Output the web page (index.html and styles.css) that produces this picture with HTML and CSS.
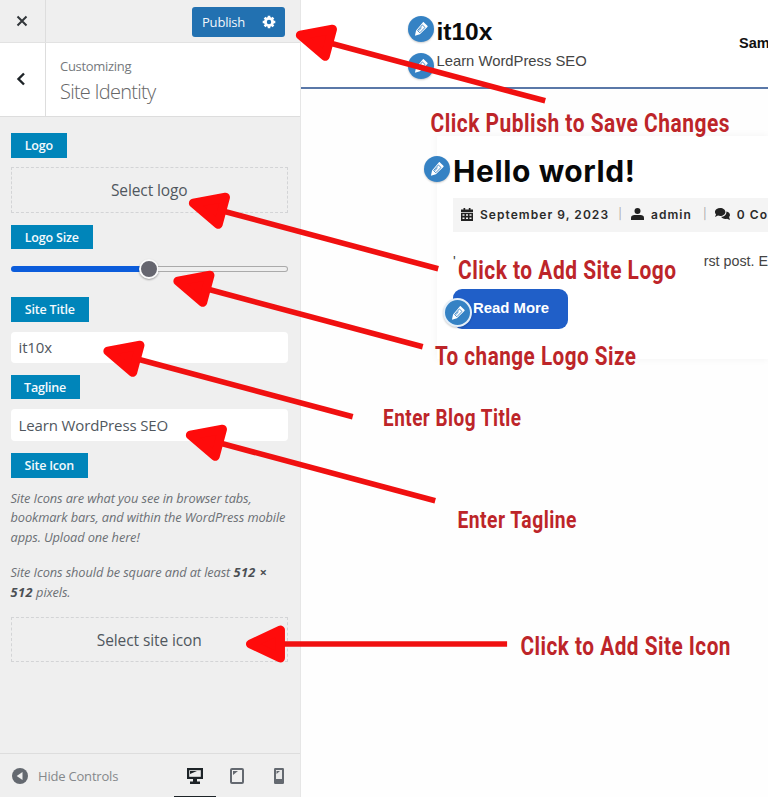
FILE: index.html
```html
<!DOCTYPE html>
<html lang="en">
<head>
<meta charset="utf-8">
<title>Customize: Site Identity</title>
<link rel="stylesheet" href="styles.css">
</head>
<body>
<svg width="0" height="0" class="defs">
  <symbol id="pencil" viewBox="0 0 20 20"><path fill="#fff" d="m13.400 1.600 4.600 4.400c.5.500.5 1.100 0 1.600L8.600 16.600 2.400 18.300l1.400-6.500 8.400-10c.4-.5.8-.6 1.200-.2z"/><path d="m5.700 12 6-7.100 3.300 3.200-6.500 6.600zM10.600 8.300 7.300 12.200" stroke="#3582c4" stroke-width="1.100" fill="none"/></symbol>
  <symbol id="arrow" viewBox="0 -20 264 40" overflow="visible"><path d="M34 0H258" stroke="#f01010" stroke-width="5.6"/><path d="M4.500 0 34-14V14Z" fill="#ff0b0b" stroke="#ff0b0b" stroke-width="9" stroke-linejoin="round"/></symbol>
</svg>
<div class="app">
  <aside class="sidebar">
    <div class="topbar">
      <button class="cell close"><svg width="12" height="12" viewBox="0 0 12 12"><path d="m1.500 1.500 9 9m0-9-9 9" stroke="#32363a" stroke-width="2"/></svg></button>
      <div class="publish"><span class="publish-text">Publish</span>
        <svg width="14" height="14" viewBox="-7 -7 14 14"><circle r="3.600" fill="none" stroke="#fff" stroke-width="2.800"/><path d="M0-6.300V-4M0 4v2.300M-6.300 0H-4M4 0h2.300M-4.400-4.400l1.500 1.500M2.900 2.900l1.500 1.500M-4.400 4.400l1.500-1.500M2.900-2.900l1.500-1.500" stroke="#fff" stroke-width="2.600"/></svg>
      </div>
    </div>
    <div class="section-head">
      <button class="cell back"><svg width="10" height="14" viewBox="0 0 10 14"><path d="M8 1.500 2.500 7 8 12.500" fill="none" stroke="#1d2327" stroke-width="2.400"/></svg></button>
      <div class="heading"><span class="small">Customizing</span><span class="big">Site Identity</span></div>
    </div>
    <div class="controls">
      <span class="label l-logo">Logo</span>
      <div class="drop"><span>Select logo</span></div>
      <span class="label l-size">Logo Size</span>
      <div class="slider"><div class="fill"></div><div class="thumb"></div><div class="rest"></div></div>
      <span class="label l-title">Site Title</span>
      <div class="field"><span>it10x</span></div>
      <span class="label l-tag">Tagline</span>
      <div class="field"><span>Learn WordPress SEO</span></div>
      <span class="label l-icon">Site Icon</span>
      <p class="desc"><span>Site Icons are what you see in browser tabs,</span><br><span>bookmark bars, and within the WordPress mobile</span><br><span>apps. Upload one here!</span></p>
      <p class="desc second"><span>Site Icons should be square and at least <b>512 ×</b></span><br><span><b>512</b> pixels.</span></p>
      <div class="drop icon-drop"><span>Select site icon</span></div>
    </div>
    <div class="footer">
      <svg width="16" height="16" viewBox="0 0 16 16"><circle cx="8" cy="8" r="8" fill="#646970"/><path d="M10.500 4v8L4.700 8z" fill="#eee"/></svg>
      <span class="hide">Hide Controls</span>
      <div class="devices">
        <div class="device active"><svg width="18" height="18" viewBox="0 0 18 18"><path d="M1 1h16v11H1z" fill="#1d2327"/><path d="M3.200 3.200h11.600v6.600H3.200z" fill="#eee"/><path d="M4 4h7L4 7z" fill="#1d2327"/><path d="M7 12h4v2.500h3V17H4v-2.500h3z" fill="#1d2327"/></svg></div>
        <div class="device"><svg width="16" height="18" viewBox="0 0 16 18"><rect x="2" y="2" width="12" height="14" rx="1" fill="none" stroke="#646970" stroke-width="2"/><path d="M4 4h5L4 8z" fill="#646970"/></svg></div>
        <div class="device"><svg width="12" height="18" viewBox="0 0 12 18"><rect x="1" y="1" width="10" height="16" rx="1.200" fill="#646970"/><path d="M3 3h6v9H3z" fill="#e8e8e8"/><path d="M3.500 4H7L3.500 7z" fill="#646970"/></svg></div>
      </div>
    </div>
  </aside>
  <main class="preview">
    <header class="site-head">
      <div class="brand">
        <div class="site-title">it10x<i class="edit e1"><svg width="16" height="16"><use href="#pencil"/></svg></i></div>
        <div class="site-tag">Learn WordPress SEO<i class="edit e2"><svg width="16" height="16"><use href="#pencil"/></svg></i></div>
      </div>
      <span class="nav">Sam</span>
    </header>
    <article class="card">
      <h1>Hello world!<i class="edit e3"><svg width="16" height="16"><use href="#pencil"/></svg></i></h1>
      <div class="meta">
        <svg width="12" height="13" viewBox="0 0 12 13"><path d="M2.500 0h1.700v1.500h3.600V0h1.700v1.500H12V4H0V1.500h2.500zM0 4.700h12V13H0z" fill="#222"/><path d="M1.500 6.200h2v1.500h-2zM5 6.200h2v1.500H5zM8.500 6.200h2v1.500h-2zM1.500 9.500h2V11h-2zM5 9.500h2V11H5zM8.500 9.500h2V11h-2z" fill="#f4f4f4"/></svg>
        <span class="date">September 9, 2023</span><span class="bar">|</span>
        <svg width="13" height="12" viewBox="0 0 13 12"><circle cx="6.500" cy="3" r="3" fill="#222"/><path d="M0 12V9.800C0 7.800 1.500 7 3.500 7h6c2 0 3.500.8 3.500 2.800V12z" fill="#222"/></svg>
        <span class="author">admin</span><span class="bar">|</span>
        <svg width="15" height="12" viewBox="0 0 15 12"><path d="M5.200 0C8.200 0 10.400 1.800 10.400 4S8.200 8 5.200 8c-.8 0-1.500-.1-2.200-.4L0 9l1-2.600C-1.600 3.600.9 0 5.200 0z" fill="#222"/><path d="M11.400 3.600c3.300.6 4.600 3.400 2.700 5.500L15 12l-3-1.200c-2.800.6-5-.3-5.800-2 3-.2 5.400-2.200 5.200-5.200z" fill="#222"/></svg>
        <span class="comments">0 Co</span>
      </div>
      <div class="excerpt"><span class="lead">'</span><span>rst post. E</span></div>
      <div class="more">Read More<i class="edit e4"><svg width="16" height="16"><use href="#pencil"/></svg></i></div>
    </article>
  </main>
</div>
<svg class="notes" width="768" height="797" viewBox="0 0 768 797">
  <use href="#arrow" width="264" height="40" transform="translate(296 34) rotate(15) translate(0 -20)"/>
  <use href="#arrow" width="264" height="40" transform="translate(189 202) rotate(15) translate(0 -20)"/>
  <use href="#arrow" width="264" height="40" transform="translate(173.500 280) rotate(15) translate(0 -20)"/>
  <use href="#arrow" width="264" height="40" transform="translate(103.500 350) rotate(15) translate(0 -20)"/>
  <use href="#arrow" width="264" height="40" transform="translate(186 434) rotate(15) translate(0 -20)"/>
  <use href="#arrow" width="264" height="40" transform="translate(246 644) scale(1.012 1) translate(0 -20)"/>
  <text class="lg" x="430.500" y="131.500" textLength="299.500" lengthAdjust="spacingAndGlyphs">Click Publish to Save Changes</text>
  <text class="lg" x="458" y="278.500" textLength="218.500" lengthAdjust="spacingAndGlyphs">Click to Add Site Logo</text>
  <text class="lg" x="435" y="365" textLength="201.500" lengthAdjust="spacingAndGlyphs">To change Logo Size</text>
  <text class="sm" x="383" y="426" textLength="138.500" lengthAdjust="spacingAndGlyphs">Enter Blog Title</text>
  <text class="sm" x="457.500" y="527.500" textLength="119.500" lengthAdjust="spacingAndGlyphs">Enter Tagline</text>
  <text class="lg" x="520.500" y="655" textLength="210.500" lengthAdjust="spacingAndGlyphs">Click to Add Site Icon</text>
</svg>
</body>
</html>
```
FILE: styles.css
```css
* { box-sizing: border-box; }
body { margin: 0; width: 768px; height: 797px; overflow: hidden; background: #fefefe; font-family: "Open Sans", "Noto Sans", sans-serif; }
svg { display: block; flex: none; }
.defs { position: absolute; }
.app { display: flex; height: 797px; }
button { border: 0; background: none; padding: 0; }

.sidebar { width: 301px; flex: none; display: flex; flex-direction: column; background: #efefef; border-right: 1px solid #e6e6e6; white-space: nowrap; }
.cell { width: 46px; flex: none; display: flex; align-items: center; justify-content: center; border-right: 1px solid #ddd; padding-right: 2px; }
.topbar { height: 43px; display: flex; justify-content: space-between; border-bottom: 1px solid #e2e2e2; }
.publish { display: flex; align-items: center; width: 93px; height: 30px; margin: 7px 15px 0 0; padding: 0 9px 0 10px; justify-content: space-between; background: #2271b1; border-radius: 3px; color: #f2f7fb; font-size: 13px; letter-spacing: -.2px; }
.section-head { height: 74px; display: flex; background: #fff; border-bottom: 1px solid #ddd; }
.back { padding: 0 3px 2px 0; }
.heading { display: flex; flex-direction: column; padding: 13px 0 0 14px; color: #75797d; }
.small { font-size: 13px; line-height: 20px; letter-spacing: -.3px; }
.big { font-size: 20px; line-height: 32px; font-weight: 300; letter-spacing: -.75px; color: #666; }

.controls { flex: 1; display: flex; flex-direction: column; align-items: flex-start; padding: 16px 12px 0 10.500px; }
.label { height: 24.500px; display: flex; align-items: center; justify-content: center; background: #0085ba; color: #f4fafd; font-size: 12.500px; font-weight: 600; letter-spacing: -.2px; padding-top: 1px; }
.l-logo { width: 56.500px; }
.l-size { width: 82.500px; margin-top: 12px; }
.l-title { width: 78.500px; }
.l-tag { width: 69px; margin-top: 11.500px; }
.l-icon { width: 77.500px; margin-top: 12.500px; }
.drop { width: 277.500px; height: 45.500px; margin-top: 9.500px; display: flex; align-items: center; justify-content: center; border: 1px dashed #d3d4d6; color: #50575e; font-size: 15.500px; letter-spacing: -.1px; }
.slider { width: 277.500px; height: 20px; margin: 9.500px 0 18.500px; display: flex; align-items: center; }
.fill { width: 129.500px; height: 6px; background: #0b5cdb; border-radius: 3px 0 0 3px; }
.thumb { width: 20px; height: 20px; margin: 0 -1px; border-radius: 50%; background: #66666f; border: 2px solid #fafafa; box-shadow: 0 1px 2px #0005; }
.rest { flex: 1; height: 6px; border: 1px solid #aaa; border-left: 0; border-radius: 0 3px 3px 0; background: #efefef; }
.field { width: 277.500px; height: 31.500px; margin-top: 10px; padding: 0 8px; display: flex; align-items: center; background: #fff; border-radius: 4px; color: #50575e; font-size: 15px; letter-spacing: -.13px; }
.desc { margin: 11px 0 0; font-size: 12.800px; line-height: 19.600px; font-style: italic; color: #6c7075; letter-spacing: -.1px; }
.desc b { color: #4b4f54; letter-spacing: .4px; }
.second { margin-top: 16px; }
.icon-drop { margin-top: 14.500px; }
.footer { height: 44px; border-top: 1px solid #ddd; display: flex; align-items: center; padding: 0 0 0 12px; }
.hide { font-size: 13px; color: #85888b; margin-left: 10px; letter-spacing: -.2px; }
.devices { margin-left: auto; display: flex; height: 44px; }
.device { width: 42px; display: flex; align-items: center; justify-content: center; padding-top: 3px; border-bottom: 2px solid transparent; }
.device.active { border-color: #1d2327; }

.preview { width: 467px; overflow: hidden; font-family: "Liberation Sans", Arial, sans-serif; white-space: nowrap; }
.site-head { height: 89px; border-bottom: 2px solid #5a78a8; display: flex; justify-content: space-between; align-items: flex-start; padding: 18px 0 0 135.500px; background: #fff; }
.site-title { position: relative; font-size: 24.500px; line-height: 28px; font-weight: 700; color: #0b0b0b; }
.site-tag { position: relative; font-size: 14.800px; line-height: 30px; color: #444; }
.nav { width: 29px; font-size: 14.500px; font-weight: 700; line-height: 20px; margin-top: 15px; color: #111; }
.edit { position: absolute; width: 26px; height: 26px; border-radius: 50%; background: #3582c4; display: flex; align-items: center; justify-content: center; box-shadow: 0 1px 2px #0003; }
.e1 { left: -29px; top: -2px; }
.e2 { left: -29px; top: 7px; }
.e3 { left: -29px; top: 5px; }
.e4 { left: -10px; top: 9px; width: 29px; height: 29px; border: 2px solid #e4eff9; }
.card { margin: 47px 0 0 136px; height: 223px; padding: 15px 0 0 16px; box-shadow: 0 0 8px #0000000d; background: #fff; }
h1 { position: relative; margin: 0; font-family: Inter, sans-serif; font-size: 30px; line-height: 40px; font-weight: 650; letter-spacing: .6px; color: #080808; }
.meta { height: 34px; margin-top: 7px; padding: 0 0 2px 8px; display: flex; align-items: center; background: #f4f4f4; font-family: Inter, sans-serif; font-size: 12px; font-weight: 600; letter-spacing: 1.050px; color: #2b2b2b; }
.date { width: 141px; margin-left: 7px; }
.bar { width: 12px; color: #aaa; font-weight: 400; font-size: 11px; }
.author { width: 53px; margin-left: 7px; }
.meta svg:nth-of-type(2) { margin-left: 1px; }
.comments { margin-left: 7px; }
.excerpt { height: 57px; padding-top: 20px; display: flex; font-size: 14.300px; line-height: 18px; color: #444; }
.excerpt .lead { width: 256px; }
.more { position: relative; width: 115px; height: 40px; padding-left: 20px; border-radius: 9px; background: #205fc8; color: #fff; font-size: 14.900px; font-weight: 700; line-height: 39px; }

.notes { position: absolute; left: 0; top: 0; pointer-events: none; font-family: Roboto, sans-serif; font-weight: 700; fill: #bd2529; letter-spacing: .6px; }
.lg { font-size: 25px; }
.sm { font-size: 23.500px; }
```
